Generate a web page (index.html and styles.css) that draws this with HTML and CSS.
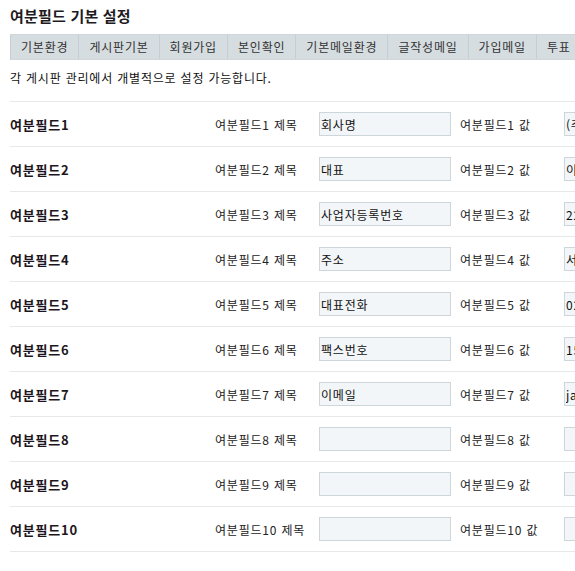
FILE: index.html
```
<!DOCTYPE html>
<html lang="ko">
<head>
  <meta charset="UTF-8">
  <meta name="viewport" content="width=device-width, initial-scale=1.0">
  <title>여분필드 기본 설정</title>
  <link rel="stylesheet" href="styles.css">
</head>
<body>
  <div class="contenitore">
    <h2 class="titolo">여분필드 기본 설정</h2>
    <ul class="schede">
      <li>기본환경</li>
      <li>게시판기본</li>
      <li>회원가입</li>
      <li>본인확인</li>
      <li>기본메일환경</li>
      <li>글작성메일</li>
      <li>가입메일</li>
      <li>투표</li>
    </ul>
    <p class="descrizione">각 게시판 관리에서 개별적으로 설정 가능합니다.</p>

    <div class="tabella">
      <div class="riga">
        <div class="nome">여분필드1</div>
        <div class="etichetta">여분필드1 제목</div>
        <input type="text" value="회사명">
        <div class="etichetta valore">여분필드1 값</div>
        <input type="text" value="(주)샘플컴퍼니">
      </div>
      <div class="riga">
        <div class="nome">여분필드2</div>
        <div class="etichetta">여분필드2 제목</div>
        <input type="text" value="대표">
        <div class="etichetta valore">여분필드2 값</div>
        <input type="text" value="이대표">
      </div>
      <div class="riga">
        <div class="nome">여분필드3</div>
        <div class="etichetta">여분필드3 제목</div>
        <input type="text" value="사업자등록번호">
        <div class="etichetta valore">여분필드3 값</div>
        <input type="text" value="220-81-12345">
      </div>
      <div class="riga">
        <div class="nome">여분필드4</div>
        <div class="etichetta">여분필드4 제목</div>
        <input type="text" value="주소">
        <div class="etichetta valore">여분필드4 값</div>
        <input type="text" value="서울시 강남구">
      </div>
      <div class="riga">
        <div class="nome">여분필드5</div>
        <div class="etichetta">여분필드5 제목</div>
        <input type="text" value="대표전화">
        <div class="etichetta valore">여분필드5 값</div>
        <input type="text" value="02-123-4567">
      </div>
      <div class="riga">
        <div class="nome">여분필드6</div>
        <div class="etichetta">여분필드6 제목</div>
        <input type="text" value="팩스번호">
        <div class="etichetta valore">여분필드6 값</div>
        <input type="text" value="1588-0000">
      </div>
      <div class="riga">
        <div class="nome">여분필드7</div>
        <div class="etichetta">여분필드7 제목</div>
        <input type="text" value="이메일">
        <div class="etichetta valore">여분필드7 값</div>
        <input type="text" value="japan@sample.com">
      </div>
      <div class="riga">
        <div class="nome">여분필드8</div>
        <div class="etichetta">여분필드8 제목</div>
        <input type="text" value="">
        <div class="etichetta valore">여분필드8 값</div>
        <input type="text" value="">
      </div>
      <div class="riga">
        <div class="nome">여분필드9</div>
        <div class="etichetta">여분필드9 제목</div>
        <input type="text" value="">
        <div class="etichetta valore">여분필드9 값</div>
        <input type="text" value="">
      </div>
      <div class="riga">
        <div class="nome">여분필드10</div>
        <div class="etichetta">여분필드10 제목</div>
        <input type="text" value="">
        <div class="etichetta valore">여분필드10 값</div>
        <input type="text" value="">
      </div>
    </div>
  </div>
</body>
</html>
```

FILE: styles.css
```
html, body {
  overflow: hidden;
}
body {
  margin: 0;
  background-color: #ffffff;
  color: #222;
  font-family: "Noto Sans CJK KR", "Noto Sans", sans-serif;
  font-size: 12px;
  letter-spacing: 0.8px;
}
.contenitore {
  padding: 0 10px;
  width: 780px;
}
.titolo {
  margin: 7px 0 0;
  font-size: 15px;
  line-height: 18px;
  font-weight: bold;
  letter-spacing: 0.2px;
  color: #221a22;
}
.schede {
  display: flex;
  margin: 9px 0 0;
  padding: 0;
  list-style: none;
  white-space: nowrap;
  background-color: #d6dde1;
  border-top: 1px solid #cfd7db;
  border-bottom: 1px solid #cfd7db;
}
.schede li {
  padding: 0 10px;
  line-height: 24px;
  color: #333;
  border-right: 1px solid #c5ced2;
}
.schede li:first-child {
  border-left: 1px solid #c5ced2;
}
.descrizione {
  margin: 10px 0 0;
  line-height: 16px;
  color: #111;
}
.tabella {
  margin-top: 15px;
  border-top: 1px solid #e8e8e8;
}
.riga {
  display: grid;
  grid-template-columns: 205px 104px 132px 113px 160px;
  align-items: center;
  height: 44px;
  border-bottom: 1px solid #e8e8e8;
}
.nome {
  font-size: 13px;
  font-weight: bold;
  color: #1d1620;
}
.etichetta {
  color: #222;
}
.valore {
  padding-left: 9px;
}
.riga input {
  box-sizing: border-box;
  width: 132px;
  height: 24px;
  margin: 0;
  padding: 0 1px;
  background-color: #f2f6f8;
  border: 1px solid #cdd6da;
  font-family: inherit;
  font-size: 12px;
  letter-spacing: inherit;
  color: #111;
}
```
